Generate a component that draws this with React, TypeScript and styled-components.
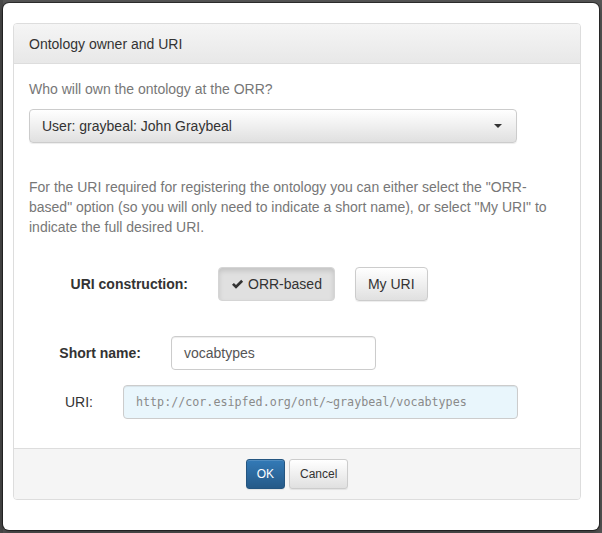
import React from "react";
import styled, { createGlobalStyle } from "styled-components";

const Global = createGlobalStyle`
  html, body { margin: 0; padding: 0; }
  body {
    background: #575757;
    font-family: "Liberation Sans", Arial, Helvetica, sans-serif;
    font-size: 14px;
    line-height: 20px;
    color: #333;
  }
  * { box-sizing: border-box; }
`;

const Page = styled.div`
  width: 602px;
  height: 533px;
  padding: 3px;
  background: #575757;
  border-left: 3px solid #4a4a4a;
  padding-left: 0;
`;

const Modal = styled.div`
  width: 596px;
  height: 527px;
  background: #fff;
  border-radius: 6px;
  box-shadow: 0 0 0 1px rgba(0, 0, 0, 0.45), 0 3px 9px rgba(0, 0, 0, 0.4);
  padding: 20px 18px 29px 10px;
`;

const Panel = styled.div`
  border: 1px solid #ddd;
  border-radius: 4px;
  background: #fff;
  overflow: hidden;
`;

const PanelHeading = styled.div`
  padding: 10px 15px 9px;
  background: linear-gradient(to bottom, #f5f5f5 0%, #e8e8e8 100%);
  border-bottom: 1px solid #ddd;
  color: #333;
  font-size: 14px;
  line-height: 20px;
`;

const PanelBody = styled.div`
  padding: 15px 15px 29px;
`;

const Muted = styled.p<{ $top?: number }>`
  margin: ${(p) => p.$top ?? 0}px 0 0;
  color: #777;
  font-size: 14px;
  line-height: 20px;
`;

const SelectButton = styled.div`
  margin-top: 10px;
  width: 488px;
  height: 34px;
  display: flex;
  align-items: center;
  justify-content: space-between;
  padding: 0 12px;
  border: 1px solid #ccc;
  border-radius: 4px;
  background: linear-gradient(to bottom, #fff 0%, #e0e0e0 100%);
  box-shadow: inset 0 1px 0 rgba(255, 255, 255, 0.15), 0 1px 1px rgba(0, 0, 0, 0.075);
  color: #333;
`;

const Caret = styled.span`
  width: 0;
  height: 0;
  border-left: 4px solid transparent;
  border-right: 4px solid transparent;
  border-top: 4px solid #333;
  margin-right: 2px;
`;

const FormRow = styled.div<{ $top: number }>`
  display: flex;
  align-items: center;
  gap: 30px;
  margin-top: ${(p) => p.$top}px;
`;

const Label = styled.div<{ $width: number; $bold?: boolean }>`
  width: ${(p) => p.$width}px;
  text-align: right;
  font-weight: ${(p) => (p.$bold ? 700 : 400)};
  color: #333;
`;

const Buttons = styled.div`
  display: flex;
  gap: 20px;
`;

const Button = styled.button<{ $active?: boolean }>`
  height: 34px;
  padding: 0 12px;
  display: inline-flex;
  align-items: center;
  gap: 4px;
  font-family: inherit;
  font-size: 14px;
  color: #333;
  border-radius: 4px;
  border: 1px solid ${(p) => (p.$active ? "#d5d5d5" : "#ccc")};
  background: ${(p) =>
    p.$active ? "#e0e0e0" : "linear-gradient(to bottom, #fff 0%, #e0e0e0 100%)"};
  box-shadow: ${(p) =>
    p.$active
      ? "inset 0 3px 5px rgba(0,0,0,0.125)"
      : "inset 0 1px 0 rgba(255,255,255,0.15), 0 1px 1px rgba(0,0,0,0.075)"};
`;

const TextInput = styled.div<{ $width: number; $readonly?: boolean }>`
  width: ${(p) => p.$width}px;
  height: 34px;
  display: flex;
  align-items: center;
  padding: 0 12px;
  border: 1px solid #ccc;
  border-radius: 4px;
  background: ${(p) => (p.$readonly ? "#e9f6fc" : "#fff")};
  box-shadow: inset 0 1px 1px rgba(0, 0, 0, 0.075);
  color: ${(p) => (p.$readonly ? "#8a8a8a" : "#555")};
  font-family: ${(p) =>
    p.$readonly ? '"DejaVu Sans Mono", "Liberation Mono", monospace' : "inherit"};
  font-size: ${(p) => (p.$readonly ? "11.7px" : "14px")};
`;

const Footer = styled.div`
  border-top: 1px solid #ddd;
  background: #f5f5f5;
  padding: 10px 15px;
  display: flex;
  justify-content: center;
  gap: 4px;
`;

const SmallButton = styled.button<{ $primary?: boolean }>`
  height: 30px;
  padding: 0 10px;
  font-family: inherit;
  font-size: 12px;
  border-radius: 3px;
  color: ${(p) => (p.$primary ? "#fff" : "#333")};
  border: 1px solid ${(p) => (p.$primary ? "#245580" : "#ccc")};
  background: ${(p) =>
    p.$primary
      ? "linear-gradient(to bottom, #337ab7 0%, #265a88 100%)"
      : "linear-gradient(to bottom, #fff 0%, #e0e0e0 100%)"};
  box-shadow: inset 0 1px 0 rgba(255, 255, 255, 0.15), 0 1px 1px rgba(0, 0, 0, 0.075);
`;

const Check = () => (
  <svg width="13" height="11" viewBox="0 0 13 11" aria-hidden="true">
    <path d="M1 5.8 L2.9 3.9 L5 6 L10.2 0.8 L12.1 2.7 L5 9.8 Z" fill="#333" />
  </svg>
);

export default function App() {
  return (
    <>
      <Global />
      <Page>
        <Modal>
          <Panel>
            <PanelHeading>Ontology owner and URI</PanelHeading>
            <PanelBody>
              <Muted>Who will own the ontology at the ORR?</Muted>
              <SelectButton>
                <span>User: graybeal: John Graybeal</span>
                <Caret />
              </SelectButton>
              <Muted $top={34}>
                For the URI required for registering the ontology you can either select the
                "ORR-based" option (so you will only need to indicate a short name), or select
                "My URI" to indicate the full desired URI.
              </Muted>
              <FormRow $top={30}>
                <Label $width={159} $bold>
                  URI construction:
                </Label>
                <Buttons>
                  <Button $active>
                    <Check />
                    ORR-based
                  </Button>
                  <Button>My URI</Button>
                </Buttons>
              </FormRow>
              <FormRow $top={35}>
                <Label $width={112} $bold>
                  Short name:
                </Label>
                <TextInput $width={205}>vocabtypes</TextInput>
              </FormRow>
              <FormRow $top={15}>
                <Label $width={64}>URI:</Label>
                <TextInput $width={395} $readonly>
                  http://cor.esipfed.org/ont/~graybeal/vocabtypes
                </TextInput>
              </FormRow>
            </PanelBody>
            <Footer>
              <SmallButton $primary>OK</SmallButton>
              <SmallButton>Cancel</SmallButton>
            </Footer>
          </Panel>
        </Modal>
      </Page>
    </>
  );
}
